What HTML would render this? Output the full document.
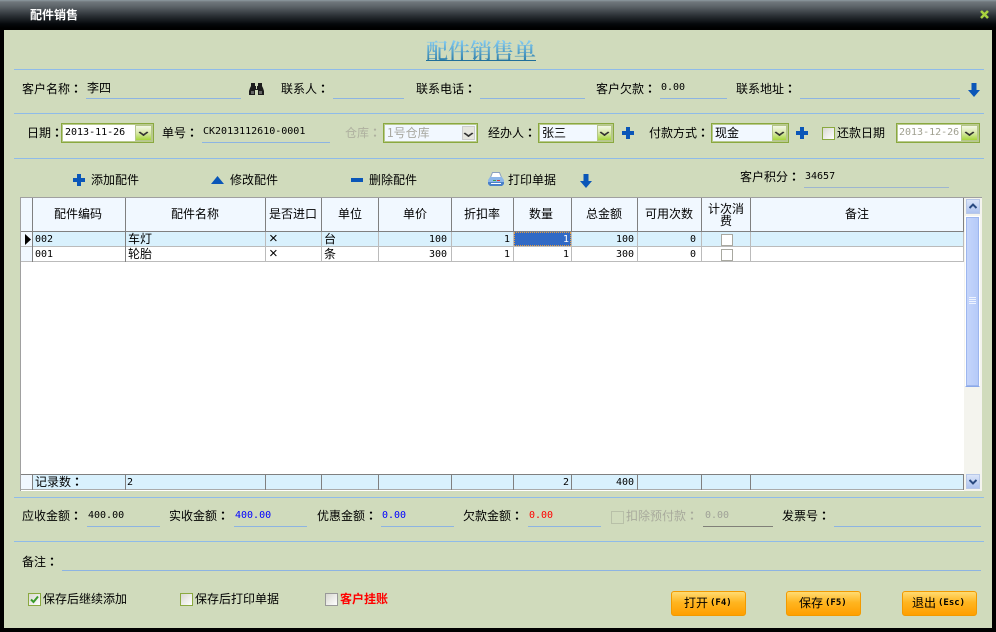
<!DOCTYPE html>
<html><head><meta charset="utf-8"><style>
html,body{margin:0;padding:0;background:#000}
#w{position:relative;width:996px;height:632px;overflow:hidden;background:#000;font:12px/12px "WenQuanYi Zen Hei","Noto Sans CJK SC",sans-serif;color:#000}
#w div,#w span,#w svg{position:absolute}
#w span{white-space:nowrap}
#w i{font-style:normal;font-family:"Noto Sans CJK TC",sans-serif;font-weight:bold}
.m{font:10px/12px "DejaVu Sans Mono",monospace}
.l{height:1px;background:#8fbbe9}
.u{height:1px;background:#8db4e2}
.c{background:#fff;border:1px solid #8aa93f;box-shadow:inset 0 0 0 1px #b9c98f;box-sizing:border-box}
.b{width:17px;height:16px;background:linear-gradient(#f3f7e6,#d8e8a8 50%,#a6d63c);border:1px solid #b5c68a;box-sizing:border-box}
.b:after{content:"";position:absolute;left:calc(50% - 4px);top:3px;width:5px;height:5px;border-right:2px solid #333;border-bottom:2px solid #333;transform:scale(1,.7) rotate(45deg)}
.ck{width:13px;height:13px;border:1px solid #8aa93f;box-sizing:border-box;background:linear-gradient(135deg,#d8d8d0,#fff)}
.btn{width:75px;height:25px;top:591px;border:1px solid #f29a00;box-sizing:border-box;border-radius:3px;background:linear-gradient(#ffdb72,#ffb520 45%,#ff9f00)}
.bm{font:bold 9px/12px "DejaVu Sans Mono",monospace}
.x{font:15px/15px "Liberation Sans",sans-serif}
.v{width:1px;background:#bbb}
.h{width:1px;background:#808080}
</style></head><body><div id="w">
<div style="left:0;top:0;width:996px;height:30px;background:linear-gradient(#8d9aa0 0,#6f767b 2px,#5f666b 6px,#2a2f34 16px,#05080b 24px,#000 28px)"></div>
<span style="left:30px;top:9px;color:#fff;font-weight:bold">配件销售</span>
<svg style="left:978px;top:8px" width="13" height="13" viewBox="0 0 13 13"><path d="M3 3L10 10M10 3L3 10" stroke="#a9d23f" stroke-width="2.6"/></svg>
<div style="left:4px;top:30px;width:988px;height:598px;background:#d0dbbc"></div>

<span style="left:426px;top:40px;font:600 22px/22px 'Noto Serif CJK SC',serif;background:linear-gradient(#86cdf3,#2a7ba6);-webkit-background-clip:text;background-clip:text;color:transparent">配件销售单</span>
<div style="left:426px;top:60px;width:110px;height:1px;background:#1f6f9a"></div>

<div class="l" style="left:14px;top:69px;width:970px"></div>
<div class="l" style="left:14px;top:113px;width:970px"></div>
<div class="l" style="left:14px;top:158px;width:970px"></div>
<div class="l" style="left:14px;top:497px;width:970px"></div>
<div class="l" style="left:14px;top:541px;width:970px"></div>

<span style="left:22px;top:83px">客户名称<i>：</i></span>
<span style="left:87px;top:82px">李四</span><div class="u" style="left:86px;top:98px;width:155px"></div>
<svg style="left:249px;top:82px" width="15" height="13" viewBox="0 0 15 13"><path d="M2 1h4v3h1v3H8V4h1V1h4v3l1 2 1 3v4H9V8H6v5H0V9l1-3 1-2z" fill="#1c1c1c"/><path d="M2 9h3v3H2zM10 9h3v3h-3z" fill="#666"/></svg>
<span style="left:281px;top:83px">联系人<i>：</i></span><div class="u" style="left:333px;top:98px;width:71px"></div>
<span style="left:416px;top:83px">联系电话<i>：</i></span><div class="u" style="left:480px;top:98px;width:105px"></div>
<span style="left:596px;top:83px">客户欠款<i>：</i></span><span class="m" style="left:661px;top:82px">0.00</span><div class="u" style="left:660px;top:98px;width:67px"></div>
<span style="left:736px;top:83px">联系地址<i>：</i></span><div class="u" style="left:800px;top:98px;width:160px"></div>
<svg style="left:968px;top:83px" width="12" height="14" viewBox="0 0 12 14"><path d="M3.500 0h5v7H12L6 14 0 7h3.500z" fill="#0a56b8"/></svg>

<span style="left:27px;top:127px">日期<i>：</i></span>
<div class="c" style="left:61px;top:123px;width:93px;height:20px"></div><span class="m" style="left:65px;top:127px">2013-11-26</span><div class="b" style="left:135px;top:125px"></div>
<span style="left:162px;top:127px">单号<i>：</i></span><span class="m" style="left:203px;top:126px">CK2013112610-0001</span><div class="u" style="left:202px;top:142px;width:128px"></div>
<span style="left:345px;top:127px;color:#aeb09f">仓库<i>：</i></span>
<div class="c" style="left:383px;top:123px;width:95px;height:20px;background:#f2f8ff"></div><span style="left:387px;top:127px;color:#a8a8a0">1号仓库</span><div class="b" style="left:462px;top:126px;width:13px;height:14px;background:#e6e6de;border-color:#ccc"></div>
<span style="left:488px;top:127px">经办人<i>：</i></span>
<div class="c" style="left:538px;top:123px;width:76px;height:20px;background:#f2f8ff"></div><span style="left:542px;top:127px">张三</span><div class="b" style="left:597px;top:125px;width:15px"></div>
<svg style="left:622px;top:127px" width="12" height="12" viewBox="0 0 12 12"><path d="M4 0h4v4h4v4H8v4H4V8H0V4h4z" fill="#0a56b8"/></svg>
<span style="left:649px;top:127px">付款方式<i>：</i></span>
<div class="c" style="left:711px;top:123px;width:78px;height:20px;background:#f2f8ff"></div><span style="left:715px;top:127px">现金</span><div class="b" style="left:772px;top:125px;width:15px"></div>
<svg style="left:796px;top:127px" width="12" height="12" viewBox="0 0 12 12"><path d="M4 0h4v4h4v4H8v4H4V8H0V4h4z" fill="#0a56b8"/></svg>
<div class="ck" style="left:822px;top:127px"></div><span style="left:837px;top:127px">还款日期</span>
<div class="c" style="left:896px;top:123px;width:84px;height:20px"></div><span class="m" style="left:899px;top:127px;color:#a0a090">2013-12-26</span><div class="b" style="left:961px;top:125px"></div>

<svg style="left:73px;top:174px" width="12" height="12" viewBox="0 0 12 12"><path d="M4 0h4v4h4v4H8v4H4V8H0V4h4z" fill="#0a56b8"/></svg>
<span style="left:91px;top:174px">添加配件</span>
<svg style="left:211px;top:176px" width="13" height="8" viewBox="0 0 13 8"><path d="M6.500 0L13 8H0z" fill="#0a56b8"/></svg>
<span style="left:230px;top:174px">修改配件</span>
<div style="left:351px;top:178px;width:12px;height:4px;background:#0a56b8"></div>
<span style="left:369px;top:174px">删除配件</span>
<svg style="left:488px;top:172px" width="16" height="14" viewBox="0 0 16 14"><path d="M4.500 .5h7l2 5h-11z" fill="#fff" stroke="#8aa0c0"/><path d="M2 5h12l2 3v4l-2 2H2L0 12V8z" fill="#8cb6e8"/><path d="M0 10h16v2l-2 2H2l-2-2z" fill="#4a80c8"/><path d="M5 8h3v1H5z" fill="#3aa04a"/><path d="M9 8h3v1H9z" fill="#d33"/><path d="M3 11h10v1H3z" fill="#fff"/></svg>
<span style="left:508px;top:174px">打印单据</span>
<svg style="left:580px;top:174px" width="12" height="14" viewBox="0 0 12 14"><path d="M3.500 0h5v7H12L6 14 0 7h3.500z" fill="#0a56b8"/></svg>
<span style="left:740px;top:171px">客户积分<i>：</i></span><span class="m" style="left:805px;top:171px">34657</span><div style="left:804px;top:187px;width:145px;height:1px;background:#9db5d0"></div>

<!-- grid -->
<div style="left:20px;top:197px;width:962px;height:294px;background:#fff;border-top:1px solid #a0a0a0;border-left:1px solid #a0a0a0;box-sizing:border-box"></div>
<div style="left:21px;top:198px;width:942px;height:33px;background:#f1f8ff"></div>
<div style="left:33px;top:232px;width:930px;height:14px;background:#d9f1fd"></div>
<div style="left:21px;top:232px;width:11px;height:14px;background:#f1f8ff"></div>
<div style="left:21px;top:247px;width:11px;height:14px;background:#f1f8ff"></div>
<div style="left:21px;top:231px;width:943px;height:1px;background:#808080"></div>
<div style="left:21px;top:246px;width:943px;height:1px;background:#bbb"></div>
<div style="left:21px;top:261px;width:943px;height:1px;background:#bbb"></div>
<div style="left:21px;top:474px;width:943px;height:1px;background:#808080"></div>
<div style="left:21px;top:475px;width:943px;height:15px;background:#d9f1fd"></div>
<div style="left:21px;top:475px;width:11px;height:15px;background:#f1f8ff"></div>
<div style="left:21px;top:489px;width:943px;height:1px;background:#aaa"></div>

<div class="h" style="left:32px;top:198px;height:33px"></div><div class="h" style="left:125px;top:198px;height:33px"></div><div class="h" style="left:265px;top:198px;height:33px"></div><div class="h" style="left:321px;top:198px;height:33px"></div><div class="h" style="left:378px;top:198px;height:33px"></div><div class="h" style="left:451px;top:198px;height:33px"></div><div class="h" style="left:513px;top:198px;height:33px"></div><div class="h" style="left:571px;top:198px;height:33px"></div><div class="h" style="left:637px;top:198px;height:33px"></div><div class="h" style="left:701px;top:198px;height:33px"></div><div class="h" style="left:750px;top:198px;height:33px"></div><div class="h" style="left:963px;top:198px;height:33px"></div>
<div class="h" style="left:32px;top:232px;height:30px"></div><div class="v" style="left:125px;top:232px;height:30px;background:#808080"></div><div class="v" style="left:265px;top:232px;height:30px"></div><div class="v" style="left:321px;top:232px;height:30px"></div><div class="v" style="left:378px;top:232px;height:30px"></div><div class="v" style="left:451px;top:232px;height:30px"></div><div class="v" style="left:513px;top:232px;height:30px"></div><div class="v" style="left:571px;top:232px;height:30px"></div><div class="v" style="left:637px;top:232px;height:30px"></div><div class="v" style="left:701px;top:232px;height:30px"></div><div class="v" style="left:750px;top:232px;height:30px"></div><div class="v" style="left:963px;top:232px;height:30px"></div>
<div class="h" style="left:32px;top:475px;height:15px"></div><div class="h" style="left:125px;top:475px;height:15px"></div><div class="h" style="left:265px;top:475px;height:15px"></div><div class="h" style="left:321px;top:475px;height:15px"></div><div class="h" style="left:378px;top:475px;height:15px"></div><div class="h" style="left:451px;top:475px;height:15px"></div><div class="h" style="left:513px;top:475px;height:15px"></div><div class="h" style="left:571px;top:475px;height:15px"></div><div class="h" style="left:637px;top:475px;height:15px"></div><div class="h" style="left:701px;top:475px;height:15px"></div><div class="h" style="left:750px;top:475px;height:15px"></div><div class="h" style="left:963px;top:475px;height:15px"></div>

<span style="left:54px;top:208px">配件编码</span><span style="left:171px;top:208px">配件名称</span><span style="left:269px;top:208px">是否进口</span><span style="left:338px;top:208px">单位</span><span style="left:403px;top:208px">单价</span><span style="left:464px;top:208px">折扣率</span><span style="left:529px;top:208px">数量</span><span style="left:586px;top:208px">总金额</span><span style="left:645px;top:208px">可用次数</span>
<span style="left:708px;top:203px">计次消</span><span style="left:720px;top:215px">费</span><span style="left:845px;top:208px">备注</span>

<svg style="left:25px;top:234px" width="6" height="11" viewBox="0 0 6 11"><path d="M0 0l6 5.500L0 11z" fill="#000"/></svg>
<span class="m" style="left:35px;top:234px">002</span><span style="left:128px;top:233px">车灯</span><span class="x" style="left:269px;top:231px">×</span><span style="left:324px;top:233px">台</span><span class="m" style="left:429px;top:234px">100</span><span class="m" style="left:504px;top:234px">1</span>
<div style="left:514px;top:232px;width:57px;height:14px;background:#316ac5;outline:1px dotted #e8a040;outline-offset:-1px"></div><span class="m" style="left:563px;top:234px;color:#fff">1</span>
<span class="m" style="left:616px;top:234px">100</span><span class="m" style="left:690px;top:234px">0</span>
<div style="left:721px;top:234px;width:10px;height:10px;background:#fff;border:1px solid #a8a8a0"></div>
<span class="m" style="left:35px;top:249px">001</span><span style="left:128px;top:248px">轮胎</span><span class="x" style="left:269px;top:246px">×</span><span style="left:324px;top:248px">条</span><span class="m" style="left:429px;top:249px">300</span><span class="m" style="left:504px;top:249px">1</span><span class="m" style="left:563px;top:249px">1</span><span class="m" style="left:616px;top:249px">300</span><span class="m" style="left:690px;top:249px">0</span>
<div style="left:721px;top:249px;width:10px;height:10px;background:#fff;border:1px solid #a8a8a0"></div>
<span style="left:35px;top:476px">记录数<i>：</i></span><span class="m" style="left:127px;top:477px">2</span><span class="m" style="left:563px;top:477px">2</span><span class="m" style="left:616px;top:477px">400</span>

<!-- scrollbar -->
<div style="left:964px;top:198px;width:18px;height:293px;background:#f4f4ee"></div>
<div style="left:966px;top:199px;width:14px;height:15px;background:linear-gradient(#dbe5f8,#aec3ef);border:1px solid #b8c8e8;box-sizing:border-box"></div>
<svg style="left:969px;top:203px" width="8" height="6" viewBox="0 0 8 6"><path d="M0.500 5L4 1.500 7.500 5" fill="none" stroke="#2a4a80" stroke-width="2"/></svg>
<div style="left:965px;top:216px;width:15px;height:171px;background:linear-gradient(90deg,#c6d6fb,#b4c9f8);border:1px solid #fff;border-bottom:1px solid #8aa8e8;outline:1px solid #9db6ee;outline-offset:-2px;box-sizing:border-box"></div>
<div style="left:969px;top:297px;width:7px;height:1px;background:#eef4ff;box-shadow:0 2px #eef4ff,0 4px #eef4ff,0 6px #eef4ff"></div>
<div style="left:966px;top:474px;width:14px;height:15px;background:linear-gradient(#dbe5f8,#aec3ef);border:1px solid #b8c8e8;box-sizing:border-box"></div>
<svg style="left:969px;top:479px" width="8" height="6" viewBox="0 0 8 6"><path d="M0.500 1L4 4.500 7.500 1" fill="none" stroke="#2a4a80" stroke-width="2"/></svg>

<!-- bottom -->
<span style="left:22px;top:510px">应收金额<i>：</i></span><span class="m" style="left:88px;top:510px">400.00</span><div class="u" style="left:87px;top:526px;width:73px"></div>
<span style="left:169px;top:510px">实收金额<i>：</i></span><span class="m" style="left:235px;top:510px;color:#00f">400.00</span><div class="u" style="left:234px;top:526px;width:73px"></div>
<span style="left:317px;top:510px">优惠金额<i>：</i></span><span class="m" style="left:382px;top:510px;color:#00f">0.00</span><div class="u" style="left:381px;top:526px;width:73px"></div>
<span style="left:463px;top:510px">欠款金额<i>：</i></span><span class="m" style="left:529px;top:510px;color:#f00">0.00</span><div class="u" style="left:528px;top:526px;width:73px"></div>
<div style="left:611px;top:511px;width:13px;height:13px;border:1px solid #b8c0a8;box-sizing:border-box"></div><span style="left:626px;top:510px;color:#a8aa9c">扣除预付款<i>：</i></span><span class="m" style="left:705px;top:510px;color:#a0a298">0.00</span><div style="left:703px;top:526px;width:70px;height:1px;background:#808078"></div>
<span style="left:782px;top:510px">发票号<i>：</i></span><div class="u" style="left:834px;top:526px;width:147px"></div>
<span style="left:22px;top:556px">备注<i>：</i></span><div class="u" style="left:62px;top:570px;width:919px"></div>

<div class="ck" style="left:28px;top:593px"></div><svg style="left:30px;top:595px" width="9" height="9" viewBox="0 0 9 9"><path d="M1 4.500L3.500 7 8 1.500" fill="none" stroke="#3a9a2a" stroke-width="2"/></svg><span style="left:43px;top:593px">保存后继续添加</span>
<div class="ck" style="left:180px;top:593px"></div><span style="left:195px;top:593px">保存后打印单据</span>
<div class="ck" style="left:325px;top:593px;border-color:#999"></div><span style="left:340px;top:593px;color:#f00;font-weight:bold">客户挂账</span>

<div class="btn" style="left:671px"></div><span style="left:684px;top:597px">打开</span><span class="bm" style="left:710px;top:597px">(F4)</span>
<div class="btn" style="left:786px"></div><span style="left:799px;top:597px">保存</span><span class="bm" style="left:825px;top:597px">(F5)</span>
<div class="btn" style="left:902px"></div><span style="left:912px;top:597px">退出</span><span class="bm" style="left:938px;top:597px">(Esc)</span>
</div></body></html>
